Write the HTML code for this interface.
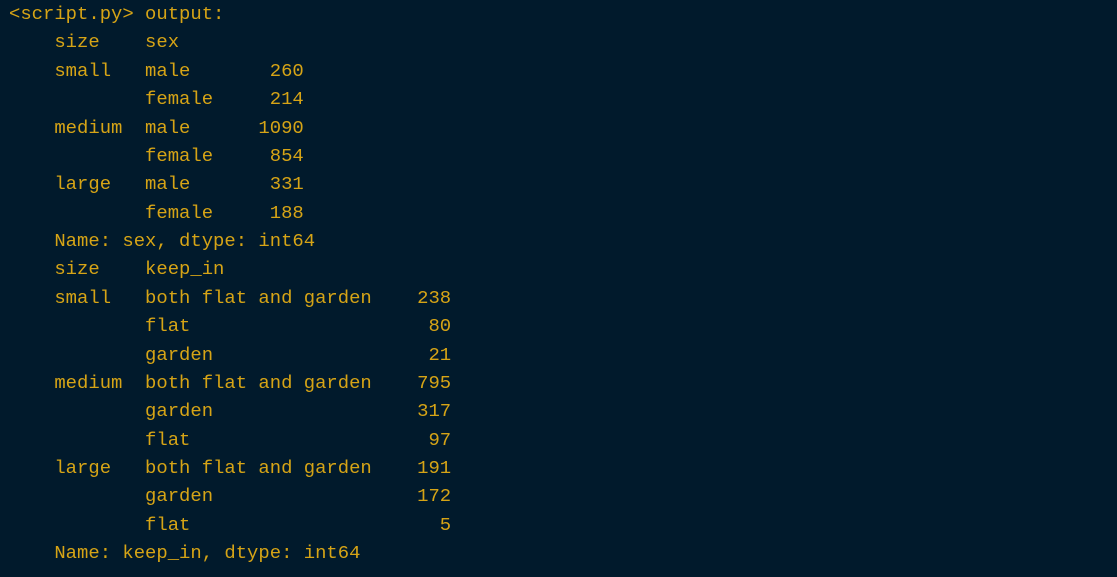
<!DOCTYPE html>
<html><head><style>
html,body{margin:0;padding:0;background:#011a2c;width:1117px;height:577px;overflow:hidden}
pre{margin:0;padding:0 0 0 9px;font-family:"Liberation Mono","DejaVu Sans Mono",monospace;font-size:18.9px;line-height:28.37px;color:#d6a416;position:relative;top:0px}
</style></head><body><pre>&lt;script.py&gt; output:
    size    sex   
    small   male       260
            female     214
    medium  male      1090
            female     854
    large   male       331
            female     188
    Name: sex, dtype: int64
    size    keep_in             
    small   both flat and garden    238
            flat                     80
            garden                   21
    medium  both flat and garden    795
            garden                  317
            flat                     97
    large   both flat and garden    191
            garden                  172
            flat                      5
    Name: keep_in, dtype: int64</pre></body></html>
